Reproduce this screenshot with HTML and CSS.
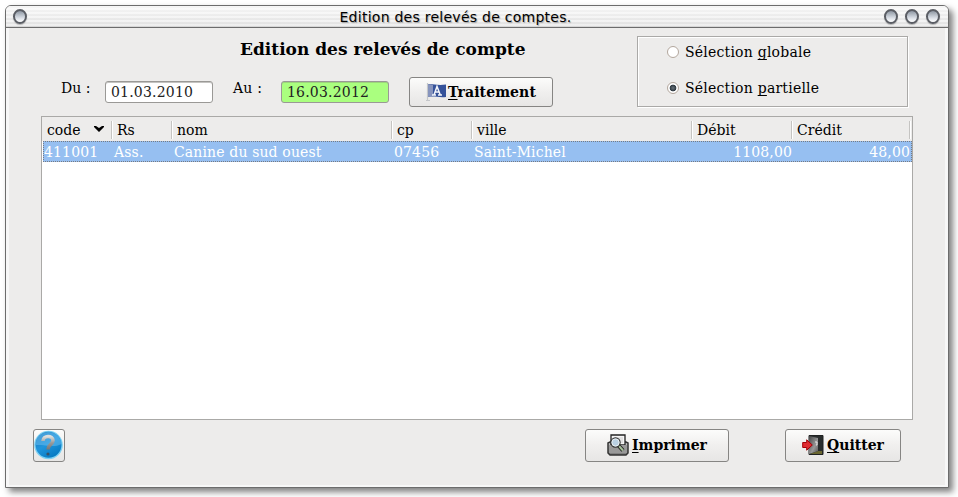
FILE: index.html
```html
<!DOCTYPE html>
<html lang="fr">
<head>
<meta charset="utf-8">
<title>Edition des relevés de comptes.</title>
<link rel="stylesheet" href="styles.css">
</head>
<body>
<div class="window">
  <header class="titlebar">
    <span class="orb"></span>
    <h1 class="caption">Edition des relevés de comptes.</h1>
    <div class="orbs"><span class="orb"></span><span class="orb"></span><span class="orb"></span></div>
  </header>
  <main class="content">
    <section class="top">
      <div class="criteria">
        <h2 class="heading">Edition des relevés de compte</h2>
        <div class="dates">
          <label class="lbl du">Du :</label>
          <div class="field"><span>01.03.2010</span></div>
          <label class="lbl au">Au :</label>
          <div class="field green"><span>16.03.2012</span></div>
          <button class="btn process">
            <svg width="22" height="20" viewBox="0 0 22 20"><path d="M1.500 1v17M0 18.500h4" stroke="#c4c6c9" stroke-width="1.200"/><path d="M2 2.500C6 1 10 4 20 2.500V15C13 16 8 13.500 2 15z" fill="#35529a"/><path d="M2 2.500C4 2 6 2.500 7 3V14.300C6 14 4 14.300 2 15z" fill="#8794bd"/><path d="M6 13h4M12 13h4M8 13l3-8.500 3.300 8.500M9.500 10h4" fill="none" stroke="#f4f6fb" stroke-width="1.500"/></svg>
            <span><u>T</u>raitement</span>
          </button>
        </div>
      </div>
      <div class="group">
        <label class="option"><i class="radio"></i><span>Sélection <u>g</u>lobale</span></label>
        <label class="option"><i class="radio on"></i><span>Sélection <u>p</u>artielle</span></label>
      </div>
    </section>
    <section class="table">
      <div class="row head">
        <div>code<svg class="arrow" width="10" height="7" viewBox="0 0 10 7"><path d="M0 1h2l3 2 3-2h2v1L5 7 0 2z"/></svg></div><div>Rs</div><div>nom</div><div>cp</div><div>ville</div><div>Débit</div><div>Crédit</div>
      </div>
      <div class="row selected">
        <div>411001</div><div>Ass.</div><div>Canine du sud ouest</div><div>07456</div><div>Saint-Michel</div><div class="num">1108,00</div><div class="num">48,00</div>
      </div>
    </section>
    <footer class="actions">
      <button class="btn help" aria-label="Aide">
        <svg width="30" height="31" viewBox="0 0 30 31"><defs><linearGradient id="blue" x1="0" y1="0" x2=".6" y2="1"><stop offset="0" stop-color="#1673b5"/><stop offset=".55" stop-color="#2095dc"/><stop offset="1" stop-color="#087cc4"/></linearGradient><linearGradient id="metal" x2="0" y2="1"><stop stop-color="#dededc"/><stop offset=".5" stop-color="#999"/><stop offset="1" stop-color="#777"/></linearGradient></defs><circle cx="14.500" cy="15" r="14.300" fill="#7bd0f2"/><circle cx="14.500" cy="14.700" r="13" fill="url(#blue)"/><path d="M2 15C1 7 8 2 14.500 2S27 7 27.500 14c-8 4-13 1-25.500 1z" fill="#78c5f3" opacity=".45"/><path d="M9 11C9 5 19 5 19 10.500c0 4-5 4-5 9" fill="none" stroke="url(#metal)" stroke-width="3.600"/><circle cx="14" cy="24" r="1.600" fill="#3b5265"/></svg>
      </button>
      <button class="btn print">
        <svg width="22" height="22" viewBox="0 0 22 22"><defs><linearGradient id="tray" x2="0" y2="1"><stop stop-color="#ccc"/><stop offset="1" stop-color="#777"/></linearGradient></defs><path d="M1 9l2-1h16l2 1v10l-2 2H3l-2-2z" fill="url(#tray)" stroke="#333" stroke-width="1.500"/><path d="M4 1h14v10H4z" fill="#f5f5f5" stroke="#222" stroke-width="1.300"/><path d="M7 4h9M7 6h9M7 8h9" stroke="#ccc"/><path d="M2 11h18v8H2z" fill="#999"/><path d="M11.500 11.500l4.500 5" stroke="#222" stroke-width="4"/><path d="M12 12l4 4.500" stroke="#a6c09a" stroke-width="2"/><circle cx="8.500" cy="8.500" r="4.600" fill="#b9d0e3" stroke="#333" stroke-width="1.200"/><circle cx="8.500" cy="8.500" r="3.600" fill="none" stroke="#e9eff2"/></svg>
        <span><u>I</u>mprimer</span>
      </button>
      <button class="btn quit">
        <svg width="22" height="20" viewBox="0 0 22 20"><defs><linearGradient id="door" x2="1" y2="1"><stop stop-color="#444"/><stop offset=".6" stop-color="#999"/><stop offset="1" stop-color="#555"/></linearGradient></defs><path d="M7 .500h14v19H7z" fill="#292d2d" stroke="#202222"/><path d="M8 19l8-3h4v3z" fill="#6a6730"/><path d="M7 1l9 2v13l-9 3z" fill="url(#door)"/><path d="M13 7h2v3h-1" fill="none" stroke="#e7e7e7"/><path d="M.700 7.500h4V4.800L10.300 10l-5.600 5.200v-2.700h-4z" fill="#df2c31" stroke="#a40008"/></svg>
        <span><u>Q</u>uitter</span>
      </button>
    </footer>
  </main>
</div>
</body>
</html>
```
FILE: styles.css
```css
* { box-sizing: border-box; }
body {
  margin: 0;
  padding: 5px;
  height: 497px;
  overflow: hidden;
  background: #fff;
  color: #000;
  font: 14px/20px "DejaVu Serif", serif;
}
.window {
  width: 944px;
  height: 483px;
  border: 1px solid #6c6c6c;
  border-radius: 6px 6px 0 0;
  background: #f7f7f7;
  box-shadow: 4px 4px 6px rgba(0, 0, 0, .5);
  overflow: hidden;
}
.titlebar {
  display: flex;
  align-items: center;
  height: 22px;
  padding: 0 7px;
  border-bottom: 1px solid #6c6c6c;
  background:
    repeating-linear-gradient(transparent 0 2px, rgba(255, 255, 255, .5) 2px 4px),
    linear-gradient(#f6f6f6, #e4e4e4 85%, #d4d4d4);
}
.caption {
  flex: 1;
  margin: 0;
  text-align: center;
  font: 14px/20px "DejaVu Sans", sans-serif;
  letter-spacing: .26px;
  text-shadow: 1px 1px 1px rgba(0, 0, 0, .3);
}
.orbs { display: flex; gap: 7px; margin-right: 1px; }
.orb {
  width: 14px;
  height: 15px;
  border: 2px solid #5a5d64;
  border-radius: 50%;
  background: linear-gradient(#8e97a3, #dce1e8 65%, #fff);
  box-shadow: 0 1px 1px rgba(0, 0, 0, .25);
}
.content {
  height: 457px;
  margin: 0 3px;
  padding: 8px 32px 0;
  background: #edeceb;
}
.top { display: flex; justify-content: space-between; height: 80px; }
.criteria { width: 590px; }
.heading {
  margin: 3px 0 0 199px;
  font-size: 17px;
  line-height: 20px;
  white-space: nowrap;
}
.dates { display: flex; margin-top: 18px; }
.lbl { line-height: 23px; }
.du { width: 64px; padding-left: 20px; }
.au { width: 68px; padding-left: 20px; letter-spacing: .2px; }
.field {
  width: 108px;
  height: 22px;
  margin-top: 4px;
  padding-left: 5px;
  border: 1px solid #9a9996;
  border-radius: 3px;
  background: #fff;
  box-shadow: inset 0 1px #c4c3c1;
  color: #222;
  line-height: 21px;
  letter-spacing: .2px;
}
.field.green { background: #aaff7f; box-shadow: inset 0 1px #9bd67a; }
.btn {
  display: flex;
  align-items: center;
  justify-content: center;
  padding: 0;
  border: 1px solid #868583;
  border-radius: 3px;
  background: linear-gradient(#fcfcfb, #f0efee 50%, #e7e6e5);
  color: #000;
  font: bold 14px/20px "DejaVu Serif", serif;
}
.btn span { margin-bottom: 1px; }
.btn svg { margin-bottom: 1px; }
u { text-underline-offset: 2px; text-decoration-thickness: 1px; text-decoration-skip-ink: none; }
.process { width: 144px; height: 30px; margin-left: 20px; letter-spacing: .1px; }
.group {
  width: 271px;
  height: 71px;
  margin-right: 5px;
  padding: 5px 0 0 29px;
  border: 1px solid #aaa9a7;
  box-shadow: inset 1px 1px #fff, 1px 1px #fff;
}
.option { display: flex; align-items: center; gap: 6px; height: 20px; margin-bottom: 16px; letter-spacing: .22px; }
.radio {
  display: block;
  width: 12px;
  height: 12px;
  border: 1px solid #b3a79d;
  border-radius: 50%;
  background: #fff;
}
.radio.on { background: radial-gradient(circle at 50% 50%, #69737b 0, #303a42 3px, #fff 3.700px); }
.table {
  width: 872px;
  height: 304px;
  border: 1px solid #aaa9a7;
  background: #fff;
}
.row { display: grid; grid-template-columns: 70px 60px 220px 80px 220px 100px 118px; }
.head { height: 24px; padding-top: 4px; background: #edeceb; }
.head div {
  height: 18px;
  padding-left: 5px;
  border-right: 1px solid #c5c4c2;
  box-shadow: 1px 0 #fff;
  line-height: 18px;
}
.arrow { margin: 0 0 3px 13px; }
.selected {
  width: 869px;
  height: 21px;
  margin-left: 1px;
  border: 1px dotted #777b82;
  background: #96bff1;
  color: #fff;
  line-height: 20px;
  letter-spacing: .14px;
}
.num { padding-right: 2px; text-align: right; }
.actions { display: flex; margin: 9px 12px 0 -8px; }
.help { width: 32px; height: 33px; }
.help svg { margin: 0; }
.print { width: 144px; height: 33px; margin-left: auto; gap: 3px; }
.quit { width: 116px; height: 33px; margin-left: 56px; gap: 3px; }
```
